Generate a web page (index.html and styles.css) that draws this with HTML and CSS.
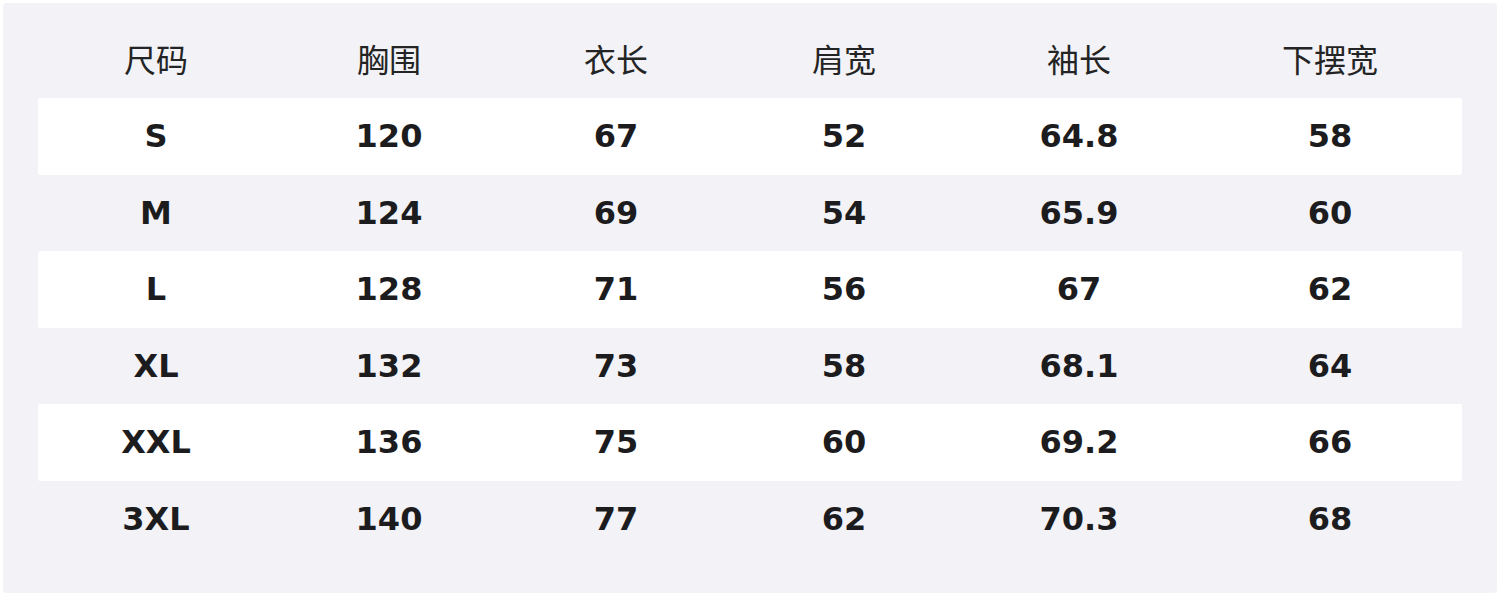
FILE: index.html
```html
<!DOCTYPE html>
<html lang="zh">
<head>
<meta charset="utf-8">
<title>尺码表</title>
<link rel="stylesheet" href="styles.css">
</head>
<body>
<div class="panel">
  <div class="row head">
    <div class="cell">尺码</div>
    <div class="cell">胸围</div>
    <div class="cell">衣长</div>
    <div class="cell">肩宽</div>
    <div class="cell">袖长</div>
    <div class="cell">下摆宽</div>
  </div>
  <div class="row odd">
    <div class="cell">S</div><div class="cell">120</div><div class="cell">67</div><div class="cell">52</div><div class="cell">64.8</div><div class="cell">58</div>
  </div>
  <div class="row">
    <div class="cell">M</div><div class="cell">124</div><div class="cell">69</div><div class="cell">54</div><div class="cell">65.9</div><div class="cell">60</div>
  </div>
  <div class="row odd">
    <div class="cell">L</div><div class="cell">128</div><div class="cell">71</div><div class="cell">56</div><div class="cell">67</div><div class="cell">62</div>
  </div>
  <div class="row">
    <div class="cell">XL</div><div class="cell">132</div><div class="cell">73</div><div class="cell">58</div><div class="cell">68.1</div><div class="cell">64</div>
  </div>
  <div class="row odd">
    <div class="cell">XXL</div><div class="cell">136</div><div class="cell">75</div><div class="cell">60</div><div class="cell">69.2</div><div class="cell">66</div>
  </div>
  <div class="row">
    <div class="cell">3XL</div><div class="cell">140</div><div class="cell">77</div><div class="cell">62</div><div class="cell">70.3</div><div class="cell">68</div>
  </div>
</div>
</body>
</html>
```
FILE: styles.css
```css
html, body {
  margin: 0;
  padding: 0;
  background: #ffffff;
}
body {
  font-family: "DejaVu Sans", "Noto Sans CJK SC", sans-serif;
  width: 1500px;
  height: 596px;
  overflow: hidden;
}
.panel {
  margin: 3px;
  width: 1494px;
  height: 590px;
  box-sizing: border-box;
  background: #f2f2f7;
  border-radius: 4px;
  padding: 35px 35px 0 35px;
}
.row {
  display: grid;
  grid-template-columns: 236px 230px 224px 232px 238px 264px;
  height: 76.5px;
  align-items: center;
  font-weight: bold;
  font-size: 32px;
  color: #1c1c1e;
}
.row.odd {
  background: #ffffff;
  border-radius: 2px;
}
.row.head {
  height: 40px;
  margin-bottom: 20px;
  font-family: "Noto Sans CJK SC", sans-serif;
  font-weight: normal;
  font-size: 32px;
  color: #242424;
}
.cell {
  text-align: center;
  line-height: 1;
}
```
